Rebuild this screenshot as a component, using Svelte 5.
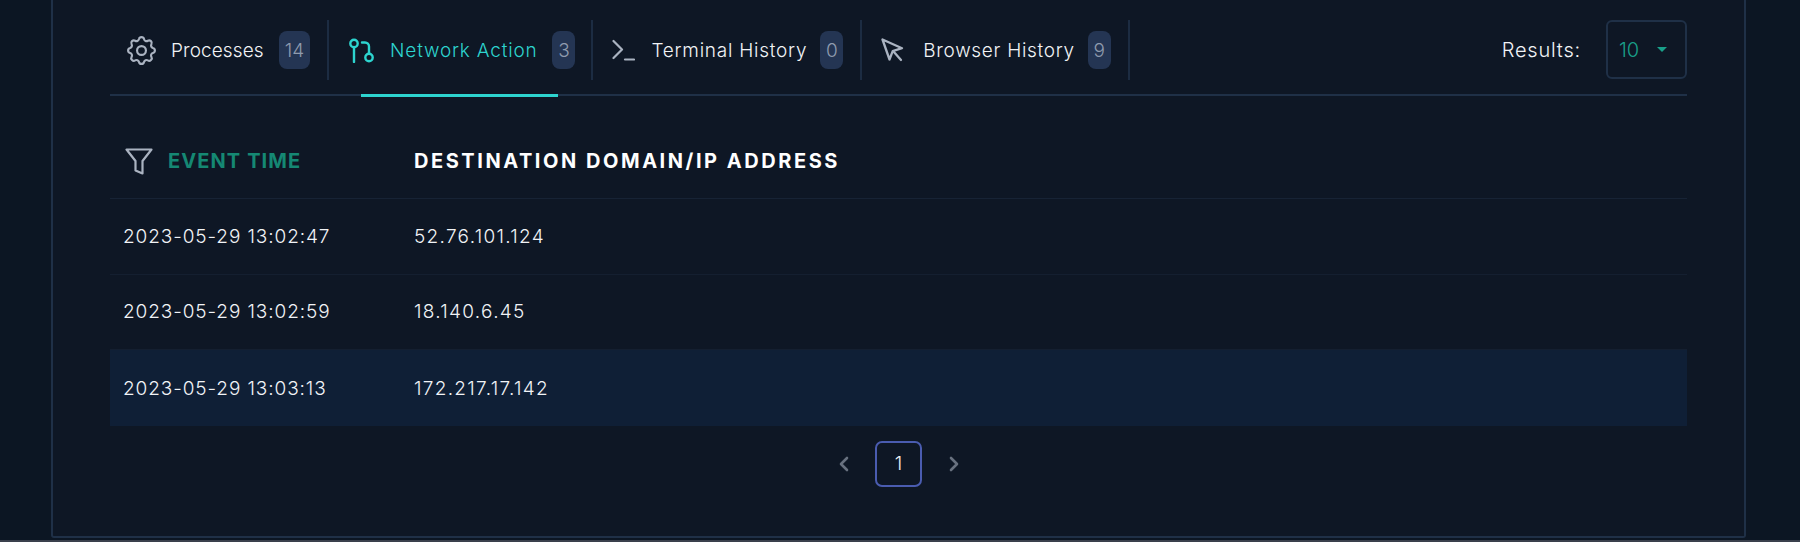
<script>
  const tabs = [
    { label: 'Processes', count: 14, icon: 'gear' },
    { label: 'Network Action', count: 3, icon: 'branch', active: true },
    { label: 'Terminal History', count: 0, icon: 'terminal' },
    { label: 'Browser History', count: 9, icon: 'cursor' }
  ];
  const rows = [
    { time: '2023-05-29 13:02:47', ip: '52.76.101.124' },
    { time: '2023-05-29 13:02:59', ip: '18.140.6.45' },
    { time: '2023-05-29 13:03:13', ip: '172.217.17.142', hl: true }
  ];
</script>

<div class="page">
  <section class="card">
    <div class="bar">
      <nav class="tabs">
        {#each tabs as t}
          <div class="tab {t.icon}" class:active={t.active}>
            {#if t.icon === 'gear'}
              <svg width="29" height="29" viewBox="2.2 2.2 19.6 19.6" fill="none" stroke="currentColor" stroke-width="1.45" stroke-linecap="round" stroke-linejoin="round"><path d="M10.3 4.3c.4-1.8 3-1.8 3.4 0a1.7 1.7 0 0 0 2.6 1.1c1.5-.9 3.3.8 2.4 2.4a1.7 1.7 0 0 0 1 2.5c1.8.4 1.8 3 0 3.4a1.7 1.7 0 0 0-1 2.6c.9 1.5-.9 3.3-2.4 2.4a1.7 1.7 0 0 0-2.6 1c-.4 1.8-3 1.8-3.4 0a1.7 1.7 0 0 0-2.6-1c-1.5.9-3.3-.9-2.4-2.4a1.7 1.7 0 0 0-1-2.6c-1.8-.4-1.8-3 0-3.4a1.7 1.7 0 0 0 1-2.5c-.9-1.6.9-3.3 2.4-2.4 1 .6 2.3.1 2.6-1.1z"/><circle cx="12" cy="12" r="3"/></svg>
            {:else if t.icon === 'branch'}
              <svg width="25" height="25" viewBox="0 0 25 25" fill="none" stroke="currentColor" stroke-width="2.4" stroke-linecap="round" stroke-linejoin="round"><circle cx="5" cy="5.5" r="3.7"/><path d="M5 9.5V24"/><circle cx="20" cy="19.5" r="3.7"/><path d="M20 15.5V8.5a4 4 0 0 0-4-4h-3"/></svg>
            {:else if t.icon === 'terminal'}
              <svg width="23" height="22" viewBox="0 0 23 22" fill="none" stroke="currentColor" stroke-width="2.2" stroke-linecap="round" stroke-linejoin="round"><path d="M1.5 2 10 10.5 1.5 19"/><path d="M13 20.5h9"/></svg>
            {:else}
              <svg width="24" height="24" viewBox="0 0 24 24" fill="none" stroke="currentColor" stroke-width="2.3" stroke-linecap="round" stroke-linejoin="round"><path d="M1.5 1.5 8.5 21.5l3.2-8.3L21 10.2z"/><path d="M12.5 13.5l7.5 8.5"/></svg>
            {/if}
            <span class="label">{t.label}</span>
            <span class="badge">{t.count}</span>
          </div>
        {/each}
      </nav>
      <div class="results">
        <span>Results:</span>
        <div class="select"><span>10</span><i class="caret"></i></div>
      </div>
    </div>

    <div class="row head">
      <div class="c1">
        <svg class="filter" width="28" height="27" viewBox="0 0 28 27" fill="none" stroke="currentColor" stroke-width="2.2" stroke-linejoin="round"><path d="M1.5 1.5h25L17.5 13v12.5l-7-3v-9.5z"/></svg>
        <span class="ev">EVENT TIME</span>
      </div>
      <div class="c2">DESTINATION DOMAIN/IP ADDRESS</div>
    </div>
    {#each rows as r}
      <div class="row body" class:hl={r.hl}>
        <div class="c1">{r.time}</div>
        <div class="c2">{r.ip}</div>
      </div>
    {/each}

    <div class="pager">
      <button aria-label="Previous"><svg width="12" height="18" viewBox="0 0 12 18" fill="none" stroke="currentColor" stroke-width="2.6" stroke-linecap="round" stroke-linejoin="round"><path d="M9 3 3 9l6 6"/></svg></button>
      <button class="cur">1</button>
      <button aria-label="Next"><svg width="12" height="18" viewBox="0 0 12 18" fill="none" stroke="currentColor" stroke-width="2.6" stroke-linecap="round" stroke-linejoin="round"><path d="M3 3l6 6-6 6"/></svg></button>
    </div>
  </section>
</div>

<style>
  :global(body) { margin: 0; background: #0c1623; }
  .page {
    height: 542px;
    box-sizing: border-box;
    padding: 0 54px 0 51px;
    overflow: hidden;
    font-family: Inter, "Liberation Sans", sans-serif;
    color: #f1f3f6;
    border-bottom: 2px solid #3a404c;
  }
  .card {
    height: 538px;
    box-sizing: border-box;
    padding: 0 57px;
    background: #0e1725;
    border: 2px solid #1f3047;
    border-top: 0;
    border-radius: 0 0 3px 3px;
  }
  .bar {
    height: 96px;
    box-sizing: border-box;
    padding-top: 20px;
    display: flex;
    justify-content: space-between;
    align-items: flex-start;
    border-bottom: 2px solid #1f3047;
  }
  .tabs { display: flex; }
  .tab {
    position: relative;
    height: 60px;
    display: flex;
    align-items: center;
    padding: 0 17px 0 19px;
    border-right: 2px solid #1c2c42;
    font-size: 19px;
    color: #aab3c1;
  }
  .gear { padding-left: 17px; }
  .branch { padding-left: 20px; padding-right: 16px; }
  .label { margin: 0 15px; color: #f1f3f6; letter-spacing: 0.8px; font-weight: 350; white-space: nowrap; }
  .gear .label { letter-spacing: 0.1px; }
  .branch .label { margin-left: 16px; }
  .terminal .label { margin-left: 16px; margin-right: 13px; letter-spacing: 0.75px; }
  .cursor .label { margin-left: 18px; margin-right: 13px; letter-spacing: 0.7px; }
  .badge {
    height: 38px;
    min-width: 15px;
    padding: 0 4px;
    border-radius: 8px;
    background: #243553;
    color: #8f9bae;
    display: flex;
    align-items: center;
    justify-content: center;
    font-weight: 300;
  }
  .gear .badge { padding: 0 6px; }
  .active, .active .label { color: #2dd4cf; }
  .active::after {
    content: "";
    position: absolute;
    left: 32px;
    right: 33px;
    bottom: -17px;
    height: 3px;
    background: #2dd4cf;
  }
  .results { display: flex; align-items: center; gap: 25px; font-size: 20px; font-weight: 350; letter-spacing: 0.8px; }
  .select {
    width: 81px;
    height: 59px;
    box-sizing: border-box;
    padding: 0 18px 0 11px;
    border: 2px solid #1f3047;
    border-radius: 6px;
    display: flex;
    align-items: center;
    justify-content: space-between;
    color: #19a08a;
    letter-spacing: 0;
    font-weight: 300;
  }
  .caret {
    width: 0;
    height: 0;
    border: 5.5px solid transparent;
    border-top: 5.5px solid #19a08a;
    border-bottom: 0;
  }
  .row { display: flex; align-items: center; padding: 0 13px; }
  .c1 { width: 291px; display: flex; align-items: center; }
  .head {
    height: 103px;
    padding-top: 28px;
    border-bottom: 1px solid #172335;
    box-sizing: border-box;
    font-weight: 700;
    font-size: 20px;
    letter-spacing: 2.55px;
    color: #fff;
  }
  .head .c1 { color: #158873; gap: 15px; }
  .ev { letter-spacing: 1.1px; }
  .filter { color: #aab3c1; flex: none; margin-left: 2px; }
  .body {
    height: 75.67px;
    box-sizing: border-box;
    border-bottom: 1px solid #141f30;
    font-size: 19px;
    font-weight: 350;
    letter-spacing: 0.9px;
  }
  .body .c2 { letter-spacing: 1.3px; }
  .hl { background: #0f1f36; border-bottom: 0; }
  .pager { display: flex; justify-content: center; gap: 8px; padding-top: 15px; }
  .pager button {
    width: 47px;
    height: 46px;
    padding: 0;
    box-sizing: border-box;
    background: transparent;
    border: 0;
    color: #68717f;
    display: flex;
    align-items: center;
    justify-content: center;
    font: inherit;
    font-size: 19px;
    font-weight: 300;
  }
  .pager .cur { border: 2px solid #4a5cb0; border-radius: 7px; color: #f1f3f6; }
</style>
